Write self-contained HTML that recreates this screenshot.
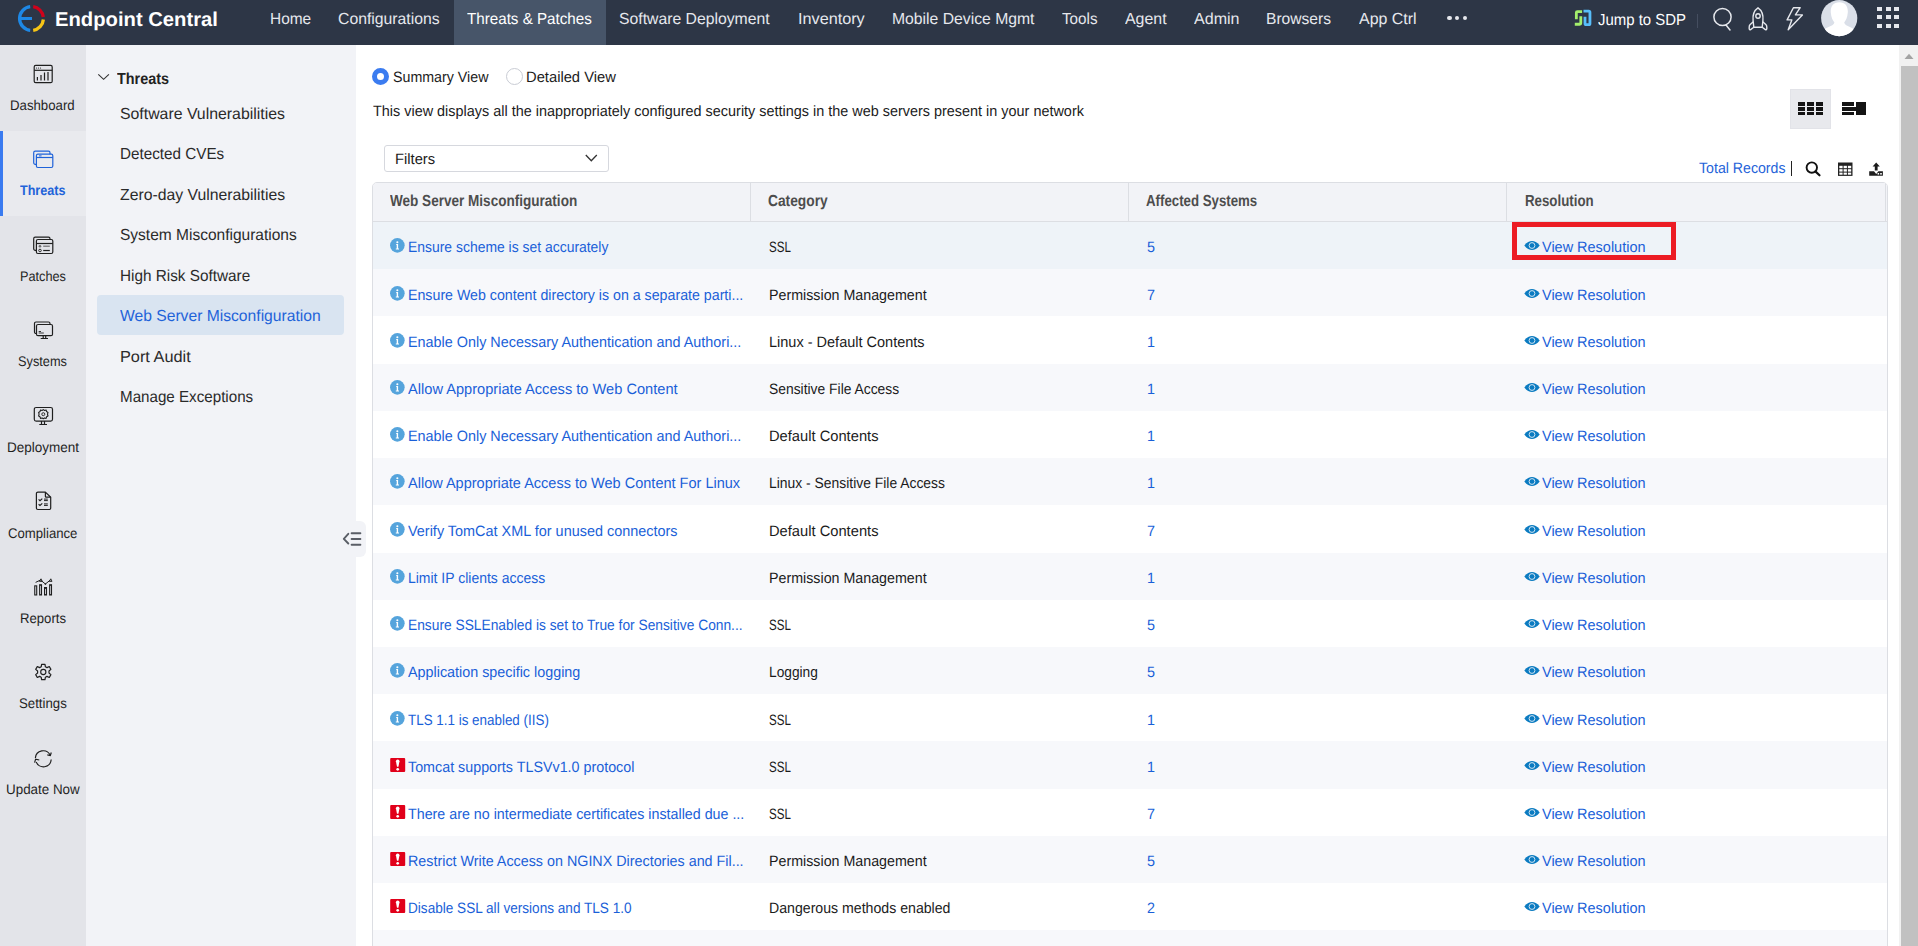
<!DOCTYPE html>
<html><head><meta charset="utf-8">
<style>
*{margin:0;padding:0;box-sizing:border-box}
html,body{width:1918px;height:946px;overflow:hidden;background:#fff;font-family:"Liberation Sans",sans-serif;color:#1b1b1b}
.a{position:absolute;white-space:nowrap;line-height:1;transform-origin:0 0;text-rendering:geometricPrecision}
.b{position:absolute}
svg{position:absolute;overflow:visible}
</style></head><body>
<div class="b" style="left:0;top:0;width:1918px;height:45px;background:#2d3646"></div>
<div class="b" style="left:454px;top:0;width:152px;height:45px;background:#475569"></div>
<svg style="left:17px;top:4px" width="30" height="30" viewBox="0 0 30 30">
<path d="M13.2 2.67 A11.9 11.9 0 0 0 13.2 26.33" fill="none" stroke="#1e88e5" stroke-width="3.3"/>
<path d="M1.2 14.5 H15" stroke="#1e88e5" stroke-width="3"/>
<path d="M16.2 2.72 A11.9 11.9 0 0 1 26.3 13" fill="none" stroke="#d0021b" stroke-width="3.3"/>
<path d="M26.36 15.5 A11.9 11.9 0 0 1 16.2 26.28" fill="none" stroke="#f6c416" stroke-width="3.3"/>
</svg>
<div class="a" style="left:55.40px;top:9.7px;font-size:20px;color:#ffffff;font-weight:bold;transform:scaleX(1.0112);">Endpoint Central</div>
<div class="a" style="left:269.90px;top:12px;font-size:16px;color:#e6e8ed;transform:scaleX(0.9649);">Home</div>
<div class="a" style="left:338.40px;top:12px;font-size:16px;color:#e6e8ed;transform:scaleX(0.9850);">Configurations</div>
<div class="a" style="left:467.40px;top:12px;font-size:16px;color:#ffffff;transform:scaleX(0.9483);">Threats &amp; Patches</div>
<div class="a" style="left:619.20px;top:12px;font-size:16px;color:#e6e8ed;transform:scaleX(0.9846);">Software Deployment</div>
<div class="a" style="left:797.80px;top:12px;font-size:16px;color:#e6e8ed;transform:scaleX(1.0137);">Inventory</div>
<div class="a" style="left:892.00px;top:12px;font-size:16px;color:#e6e8ed;transform:scaleX(0.9831);">Mobile Device Mgmt</div>
<div class="a" style="left:1062.30px;top:12px;font-size:16px;color:#e6e8ed;transform:scaleX(0.9505);">Tools</div>
<div class="a" style="left:1125.00px;top:12px;font-size:16px;color:#e6e8ed;transform:scaleX(0.9952);">Agent</div>
<div class="a" style="left:1193.50px;top:12px;font-size:16px;color:#e6e8ed;transform:scaleX(1.0033);">Admin</div>
<div class="a" style="left:1266.40px;top:12px;font-size:16px;color:#e6e8ed;transform:scaleX(0.9745);">Browsers</div>
<div class="a" style="left:1359.00px;top:12px;font-size:16px;color:#e6e8ed;transform:scaleX(0.9965);">App Ctrl</div>
<div class="b" style="left:1447.2px;top:15.7px;width:4.6px;height:4.6px;border-radius:50%;background:#e6e8ed"></div>
<div class="b" style="left:1454.9px;top:15.7px;width:4.6px;height:4.6px;border-radius:50%;background:#e6e8ed"></div>
<div class="b" style="left:1462.7px;top:15.7px;width:4.6px;height:4.6px;border-radius:50%;background:#e6e8ed"></div>
<svg style="left:1570px;top:5px" width="26" height="26" viewBox="1570 5 26 26">
<path d="M1576.35 19.3 V12.6 Q1576.35 11.55 1577.4 11.55 H1582.1" fill="none" stroke="#a4ef6c" stroke-width="2.8"/>
<path d="M1580.8 16.3 V23.2 Q1580.8 24.25 1579.75 24.25 H1574.8" fill="none" stroke="#a4ef6c" stroke-width="2.8"/>
<path d="M1585 16.8 V23.4 Q1585 24.65 1586.25 24.65 H1588.7 Q1589.95 24.65 1589.95 23.4 V12.45 Q1589.95 11.2 1588.7 11.2 H1583.5" fill="none" stroke="#58befa" stroke-width="2.8"/>
</svg>
<div class="a" style="left:1598.00px;top:13px;font-size:16px;color:#ffffff;transform:scaleX(0.9337);">Jump to SDP</div>
<div class="b" style="left:1697px;top:14px;width:1px;height:14px;background:#454e60"></div>
<svg style="left:1712px;top:7px" width="22" height="24" viewBox="0 0 22 24">
<circle cx="10.5" cy="10" r="8.6" fill="none" stroke="#e6e8ed" stroke-width="1.5"/>
<path d="M14 18 L18 23" stroke="#e6e8ed" stroke-width="1.5" stroke-linecap="round"/>
</svg>
<svg style="left:1748px;top:7px" width="20" height="24" viewBox="0 0 20 24">
<path d="M10 0.8 C14 3.5 15.4 8.5 14.9 13.5 L14.2 20.3 H5.8 L5.1 13.5 C4.6 8.5 6 3.5 10 0.8 Z" fill="none" stroke="#e6e8ed" stroke-width="1.4" stroke-linejoin="round"/>
<circle cx="10" cy="9" r="2.2" fill="none" stroke="#e6e8ed" stroke-width="1.4"/>
<path d="M5.3 14.8 L2.2 17.6 C1.5 18.3 1.2 19 1.2 20 V21.8 C1.2 22.6 1.9 23 2.6 22.6 L5.8 20.3 M14.7 14.8 L17.8 17.6 C18.5 18.3 18.8 19 18.8 20 V21.8 C18.8 22.6 18.1 23 17.4 22.6 L14.2 20.3" fill="none" stroke="#e6e8ed" stroke-width="1.4" stroke-linejoin="round"/>
</svg>
<svg style="left:1786px;top:7px" width="18" height="24" viewBox="0 0 18 24">
<path d="M7.4 0.7 H14.2 L9.4 7.9 H16.4 L2.2 22.8 L5.8 12.9 H1.1 Z" fill="none" stroke="#e6e8ed" stroke-width="1.4" stroke-linejoin="round"/>
</svg>
<svg style="left:1821px;top:0px" width="37" height="37" viewBox="0 0 37 37">
<defs><clipPath id="avc"><circle cx="18.2" cy="18.1" r="18.1"/></clipPath></defs>
<circle cx="18.2" cy="18.1" r="18.1" fill="#dadfe8"/>
<g clip-path="url(#avc)">
<path d="M18.3 2.2 C24.5 2.2 27.2 6.5 26.8 12.5 C26.4 17.5 24.8 20.5 23.2 22.6 C23.6 24.6 26 26 30 27.5 C34 29 36.5 32 37 37 H-1 C-0.5 32 2.5 29 6.5 27.5 C10.5 26 13 24.6 13.4 22.6 C11.8 20.5 10.2 17.5 9.8 12.5 C9.4 6.5 12.1 2.2 18.3 2.2 Z" fill="#ffffff"/>
</g>
</svg>
<div class="b" style="left:1877px;top:7px;width:4.8px;height:4.2px;background:#e6e8ed"></div>
<div class="b" style="left:1877px;top:15.1px;width:4.8px;height:4.2px;background:#e6e8ed"></div>
<div class="b" style="left:1877px;top:23.9px;width:4.8px;height:4.2px;background:#e6e8ed"></div>
<div class="b" style="left:1885.8px;top:7px;width:4.8px;height:4.2px;background:#e6e8ed"></div>
<div class="b" style="left:1885.8px;top:15.1px;width:4.8px;height:4.2px;background:#e6e8ed"></div>
<div class="b" style="left:1885.8px;top:23.9px;width:4.8px;height:4.2px;background:#e6e8ed"></div>
<div class="b" style="left:1894.2px;top:7px;width:4.8px;height:4.2px;background:#e6e8ed"></div>
<div class="b" style="left:1894.2px;top:15.1px;width:4.8px;height:4.2px;background:#e6e8ed"></div>
<div class="b" style="left:1894.2px;top:23.9px;width:4.8px;height:4.2px;background:#e6e8ed"></div>
<div class="b" style="left:0;top:45px;width:86px;height:901px;background:#e3e4e9"></div>
<div class="b" style="left:0;top:131px;width:86px;height:85px;background:#e9eaee"></div>
<div class="b" style="left:0;top:131px;width:3px;height:85px;background:#3a7bf0"></div>
<div class="a" style="left:10.40px;top:98px;font-size:14px;color:#1f1f1f;transform:scaleX(0.9445);">Dashboard</div>
<div class="a" style="left:20.30px;top:183px;font-size:14px;color:#1f63d9;font-weight:bold;transform:scaleX(0.8981);">Threats</div>
<div class="a" style="left:19.90px;top:269px;font-size:14px;color:#1f1f1f;transform:scaleX(0.9091);">Patches</div>
<div class="a" style="left:18.30px;top:354px;font-size:14px;color:#1f1f1f;transform:scaleX(0.9106);">Systems</div>
<div class="a" style="left:7.10px;top:440px;font-size:14px;color:#1f1f1f;transform:scaleX(0.9652);">Deployment</div>
<div class="a" style="left:7.90px;top:526px;font-size:14px;color:#1f1f1f;transform:scaleX(0.9391);">Compliance</div>
<div class="a" style="left:19.80px;top:611px;font-size:14px;color:#1f1f1f;transform:scaleX(0.9388);">Reports</div>
<div class="a" style="left:18.70px;top:696px;font-size:14px;color:#1f1f1f;transform:scaleX(0.9447);">Settings</div>
<div class="a" style="left:6.10px;top:782px;font-size:14px;color:#1f1f1f;transform:scaleX(0.9572);">Update Now</div>
<svg style="left:33px;top:64px" width="21" height="20" viewBox="0 0 21 20">
<rect x="1.2" y="1.4" width="18" height="17.3" rx="1.5" fill="none" stroke="#1f1f1f" stroke-width="1.2"/>
<path d="M1.2 6.3 H19.2" stroke="#1f1f1f" stroke-width="1.2"/>
<circle cx="3.5" cy="4" r="0.6" fill="#1f1f1f"/><circle cx="5.5" cy="4" r="0.6" fill="#1f1f1f"/><circle cx="7.5" cy="4" r="0.6" fill="#1f1f1f"/>
<path d="M4.4 13 V16.5 M8 11 V16.5 M11.5 8.5 V16.5 M15 8 V16.5" stroke="#1f1f1f" stroke-width="1.2"/>
</svg>
<svg style="left:32px;top:150px" width="22" height="19" viewBox="0 0 22 19">
<path d="M4.4 14.3 H3.2 A1.5 1.5 0 0 1 1.7 12.8 V2.7 A1.5 1.5 0 0 1 3.2 1.2 H16.5 A1.5 1.5 0 0 1 18 2.7 V4.2" fill="none" stroke="#1f63d9" stroke-width="1.2"/>
<rect x="4.4" y="4.2" width="16.4" height="13.3" rx="1.5" fill="none" stroke="#1f63d9" stroke-width="1.2"/>
<path d="M4.4 7.5 H20.8" stroke="#1f63d9" stroke-width="1.2"/>
<path d="M7 5.9 H9.6" stroke="#1f63d9" stroke-width="1"/>
</svg>
<svg style="left:32px;top:236px" width="22" height="19" viewBox="0 0 22 19">
<path d="M4.4 14.3 H3.2 A1.5 1.5 0 0 1 1.7 12.8 V2.7 A1.5 1.5 0 0 1 3.2 1.2 H16.5 A1.5 1.5 0 0 1 18 2.7 V3.5" fill="none" stroke="#1f1f1f" stroke-width="1.2"/>
<rect x="4.4" y="3.5" width="16.4" height="14" rx="1.5" fill="none" stroke="#1f1f1f" stroke-width="1.2"/>
<path d="M4.4 7.5 H20.8" stroke="#1f1f1f" stroke-width="1.2"/>
<circle cx="8" cy="10.2" r="1.3" fill="#1f1f1f" opacity="0.6"/><path d="M11.2 10.2 H17.8" stroke="#1f1f1f" stroke-width="1.2" opacity="0.6"/>
<circle cx="8" cy="14.5" r="1.3" fill="none" stroke="#1f1f1f" stroke-width="0.9"/><path d="M11.2 14.5 H17.8" stroke="#1f1f1f" stroke-width="1.2"/>
</svg>
<svg style="left:33px;top:321px" width="21" height="19" viewBox="0 0 21 19">
<path d="M3.5 12.5 H3 A1.5 1.5 0 0 1 1.5 11 V2.5 A1.5 1.5 0 0 1 3 1 H15.5 A1.5 1.5 0 0 1 17 2.5 V3.5" fill="none" stroke="#1f1f1f" stroke-width="1.2"/>
<rect x="3.5" y="3.5" width="16" height="11.2" rx="1.5" fill="none" stroke="#1f1f1f" stroke-width="1.2"/>
<path d="M5.7 10.5 H8 M5.7 12 H10.8" stroke="#1f1f1f" stroke-width="0.9"/>
<path d="M10.2 14.7 V17.5 M12.7 14.7 V17.5 M7.7 17.5 H15" stroke="#1f1f1f" stroke-width="1.2"/>
</svg>
<svg style="left:33px;top:406px" width="21" height="20" viewBox="0 0 21 20">
<rect x="1.3" y="1.5" width="18.2" height="13.6" rx="1.8" fill="none" stroke="#1f1f1f" stroke-width="1.2"/>
<path d="M8.5 15.1 V18.3 M11.5 15.1 V18.3 M6.3 18.5 H14" stroke="#1f1f1f" stroke-width="1.2"/>
<path d="M10.3 3.6 L11.6 4.5 L13.1 4 L13.6 5.6 L15 6.4 L14.5 8.2 L15 10 L13.6 10.8 L13.1 12.4 L11.6 11.9 L10.3 12.8 L9 11.9 L7.5 12.4 L7 10.8 L5.6 10 L6.1 8.2 L5.6 6.4 L7 5.6 L7.5 4 L9 4.5 Z" fill="none" stroke="#1f1f1f" stroke-width="1.1" stroke-linejoin="round"/>
<circle cx="10.3" cy="8.2" r="1.5" fill="none" stroke="#1f1f1f" stroke-width="0.9"/>
</svg>
<svg style="left:35px;top:491px" width="17" height="20" viewBox="0 0 17 20">
<path d="M10.4 1.1 H2.9 A1.5 1.5 0 0 0 1.4 2.6 V17 A1.5 1.5 0 0 0 2.9 18.5 H14.2 A1.5 1.5 0 0 0 15.7 17 V6.2 Z" fill="none" stroke="#1f1f1f" stroke-width="1.2" stroke-linejoin="round"/>
<path d="M10.4 1.1 V5.4 A0.8 0.8 0 0 0 11.2 6.2 H15.7" fill="none" stroke="#1f1f1f" stroke-width="1.2"/>
<path d="M3.6 8.4 L5 9.6 L7.3 7.6 M3.6 13.2 L5 14.4 L7.3 12.4" fill="none" stroke="#1f1f1f" stroke-width="1.2"/>
<path d="M9 8.1 H12.8 M9 9.6 H12.8 M9 12.9 H12.8 M9 14.4 H12.8" stroke="#1f1f1f" stroke-width="1"/>
</svg>
<svg style="left:33px;top:577px" width="21" height="21" viewBox="0 0 21 21">
<rect x="1.75" y="8.85" width="1.95" height="9.1" fill="none" stroke="#1f1f1f" stroke-width="1.1"/>
<rect x="6.65" y="7.75" width="1.85" height="10.2" fill="none" stroke="#1f1f1f" stroke-width="1.1"/>
<rect x="11.55" y="10.55" width="1.95" height="7.4" fill="none" stroke="#1f1f1f" stroke-width="1.1"/>
<rect x="16.65" y="7.75" width="1.85" height="10.2" fill="none" stroke="#1f1f1f" stroke-width="1.1"/>
<path d="M2.6 5.4 L7.5 3 L12.4 7 L17.4 3" fill="none" stroke="#1f1f1f" stroke-width="1"/>
<path d="M6.4 4.4 L8 1.8 L9.3 4.4 Z M16.3 4.4 L17.8 1.8 L19 4.4 Z" fill="none" stroke="#1f1f1f" stroke-width="0.9"/>
<path d="M11.4 7 L12.4 6 L13.4 7 L12.4 8 Z" fill="#1f1f1f"/>
</svg>
<svg style="left:33px;top:662px" width="21" height="20" viewBox="0 0 21 20">
<path d="M8.6 1.3 H12 L12.4 3.8 L14 4.6 L16.3 3.5 L17.9 6.4 L16 8 V10 L17.9 11.6 L16.3 14.5 L14 13.4 L12.4 14.2 L12 16.7 H8.6 L8.2 14.2 L6.6 13.4 L4.3 14.5 L2.7 11.6 L4.6 10 V8 L2.7 6.4 L4.3 3.5 L6.6 4.6 L8.2 3.8 Z" fill="none" stroke="#1f1f1f" stroke-width="1.2" stroke-linejoin="round" transform="translate(0,1)"/>
<circle cx="10.3" cy="10" r="2.6" fill="none" stroke="#1f1f1f" stroke-width="1.1"/>
</svg>
<svg style="left:33px;top:749px" width="21" height="20" viewBox="0 0 21 20">
<path d="M2.4 9 A7.8 7.8 0 0 1 17.2 6.2" fill="none" stroke="#1f1f1f" stroke-width="1.2"/>
<path d="M18.2 10.5 A7.8 7.8 0 0 1 3.2 13" fill="none" stroke="#1f1f1f" stroke-width="1.2"/>
<path d="M14.3 5.8 L17.3 6.5 L18.3 3.5" fill="none" stroke="#1f1f1f" stroke-width="1.2"/>
<path d="M6.3 11 L2.6 10.2 L1.6 13.6" fill="none" stroke="#1f1f1f" stroke-width="1.2"/>
</svg>
<div class="b" style="left:86px;top:45px;width:270px;height:901px;background:#f2f3f7"></div>
<div class="b" style="left:340px;top:521px;width:26px;height:36px;border-radius:0 6px 6px 0;background:#f2f3f7"></div>
<svg style="left:342px;top:532px" width="20" height="14" viewBox="0 0 20 14">
<path d="M6.3 1.8 L1.8 6.8 L6.3 11.5" fill="none" stroke="#5a5e66" stroke-width="1.9" stroke-linecap="round" stroke-linejoin="round"/>
<path d="M9.6 1.3 H18.4 M9.6 7 H18.4 M9.6 12.7 H18.4" stroke="#5a5e66" stroke-width="1.9" stroke-linecap="round"/>
</svg>
<svg style="left:97px;top:72px" width="14" height="11" viewBox="0 0 14 11">
<path d="M1.3 2.3 L6.6 7.3 L11.9 2.3" fill="none" stroke="#333" stroke-width="1.15"/>
</svg>
<div class="a" style="left:116.70px;top:72px;font-size:16px;color:#222;font-weight:bold;transform:scaleX(0.8997);">Threats</div>
<div class="b" style="left:97px;top:295px;width:247px;height:40px;border-radius:4px;background:#d9e4f1"></div>
<div class="a" style="left:119.70px;top:107px;font-size:16px;color:#2a2a2a;transform:scaleX(0.9898);">Software Vulnerabilities</div>
<div class="a" style="left:119.70px;top:147px;font-size:16px;color:#2a2a2a;transform:scaleX(0.9525);">Detected CVEs</div>
<div class="a" style="left:119.70px;top:188px;font-size:16px;color:#2a2a2a;transform:scaleX(0.9857);">Zero-day Vulnerabilities</div>
<div class="a" style="left:119.70px;top:228px;font-size:16px;color:#2a2a2a;transform:scaleX(0.9693);">System Misconfigurations</div>
<div class="a" style="left:119.70px;top:269px;font-size:16px;color:#2a2a2a;transform:scaleX(0.9570);">High Risk Software</div>
<div class="a" style="left:119.70px;top:309px;font-size:16px;color:#1f63d9;transform:scaleX(0.9783);">Web Server Misconfiguration</div>
<div class="a" style="left:119.70px;top:350px;font-size:16px;color:#2a2a2a;transform:scaleX(1.0187);">Port Audit</div>
<div class="a" style="left:119.70px;top:390px;font-size:16px;color:#2a2a2a;transform:scaleX(0.9477);">Manage Exceptions</div>
<div class="b" style="left:372px;top:67.5px;width:17px;height:17px;border-radius:50%;border:5px solid #3b7cf0;background:#fff"></div>
<div class="b" style="left:505.5px;top:67.5px;width:17px;height:17px;border-radius:50%;border:1px solid #c9ccd4;background:#fff"></div>
<div class="a" style="left:393.20px;top:70px;font-size:15px;color:#1b1b1b;transform:scaleX(0.9488);">Summary View</div>
<div class="a" style="left:526.30px;top:70px;font-size:15px;color:#1b1b1b;transform:scaleX(0.9825);">Detailed View</div>
<div class="a" style="left:373.10px;top:104px;font-size:15px;color:#1b1b1b;transform:scaleX(0.9613);">This view displays all the inappropriately configured security settings in the web servers present in your network</div>
<div class="b" style="left:384px;top:145px;width:225px;height:27px;border:1px solid #d6d8de;border-radius:3px;background:#fff"></div>
<div class="a" style="left:394.50px;top:152px;font-size:15px;color:#1b1b1b;transform:scaleX(0.9816);">Filters</div>
<svg style="left:584px;top:153px" width="15" height="11" viewBox="0 0 15 11">
<path d="M1.8 2 L7.3 7.8 L12.8 2" fill="none" stroke="#333" stroke-width="1.3"/>
</svg>
<div class="b" style="left:1790px;top:89px;width:41px;height:40px;background:#e8e9ed;border:1px solid #e2e3e8"></div>
<div class="b" style="left:1797.8px;top:102.2px;width:7px;height:3.4px;background:#141414"></div>
<div class="b" style="left:1797.8px;top:107.2px;width:7px;height:3.4px;background:#141414"></div>
<div class="b" style="left:1797.8px;top:112px;width:7px;height:3.4px;background:#141414"></div>
<div class="b" style="left:1806.8px;top:102.2px;width:7px;height:3.4px;background:#141414"></div>
<div class="b" style="left:1806.8px;top:107.2px;width:7px;height:3.4px;background:#141414"></div>
<div class="b" style="left:1806.8px;top:112px;width:7px;height:3.4px;background:#141414"></div>
<div class="b" style="left:1815.6px;top:102.2px;width:7px;height:3.4px;background:#141414"></div>
<div class="b" style="left:1815.6px;top:107.2px;width:7px;height:3.4px;background:#141414"></div>
<div class="b" style="left:1815.6px;top:112px;width:7px;height:3.4px;background:#141414"></div>
<div class="b" style="left:1842px;top:102.2px;width:12px;height:3.4px;background:#141414"></div>
<div class="b" style="left:1842px;top:107.2px;width:14px;height:3.4px;background:#141414"></div>
<div class="b" style="left:1842px;top:112px;width:12px;height:3.4px;background:#141414"></div>
<div class="b" style="left:1856px;top:102.2px;width:10.4px;height:13.3px;background:#141414"></div>
<div class="a" style="left:1699.40px;top:161px;font-size:15px;color:#1f63d9;transform:scaleX(0.9433);">Total Records</div>
<div class="b" style="left:1790.5px;top:161px;width:1.5px;height:14.5px;background:#222"></div>
<svg style="left:1804px;top:160px" width="18" height="18" viewBox="0 0 18 18">
<circle cx="7.8" cy="7.6" r="5.2" fill="none" stroke="#111" stroke-width="1.9"/>
<path d="M11.6 11.6 L15.5 15.3" stroke="#111" stroke-width="2.2" stroke-linecap="round"/>
</svg>
<svg style="left:1838px;top:162px" width="15" height="14" viewBox="0 0 15 14">
<rect x="0" y="0.5" width="14.5" height="13.4" fill="#222"/>
<g fill="#fff">
<rect x="1.3" y="3.8" width="3.3" height="2.4"/><rect x="5.6" y="3.8" width="3.3" height="2.4"/><rect x="9.9" y="3.8" width="3.3" height="2.4"/>
<rect x="1.3" y="7.2" width="3.3" height="2.4"/><rect x="5.6" y="7.2" width="3.3" height="2.4"/><rect x="9.9" y="7.2" width="3.3" height="2.4"/>
<rect x="1.3" y="10.6" width="3.3" height="2.1"/><rect x="5.6" y="10.6" width="3.3" height="2.1"/><rect x="9.9" y="10.6" width="3.3" height="2.1"/>
</g>
</svg>
<svg style="left:1865px;top:160px" width="22" height="18" viewBox="1865 160 22 18">
<path d="M1876.2 162.6 L1879.8 166.4 H1877.6 V170.6 H1874.8 V166.4 H1872.6 Z" fill="#1a1a1a"/>
<path d="M1869.2 171.2 H1874 L1876.2 173.9 L1878.4 171.2 H1882.9 V175.7 H1869.2 Z" fill="#1f1f1f"/>
<rect x="1877.6" y="173" width="1.5" height="1.6" fill="#fff"/><rect x="1880.2" y="173" width="1.6" height="1.6" fill="#fff"/>
</svg>
<div class="b" style="left:372px;top:182px;width:1516px;height:800px;border:1px solid #dcdee3;border-radius:5px 5px 0 0;background:#fff;overflow:hidden"><div class="b" style="left:0;top:0;width:100%;height:39px;background:#f2f3f7;border-bottom:1px solid #dcdee3"></div><div class="b" style="left:377px;top:0;width:1px;height:38px;background:#dcdee3"></div><div class="b" style="left:755px;top:0;width:1px;height:38px;background:#dcdee3"></div><div class="b" style="left:1133px;top:0;width:1px;height:38px;background:#dcdee3"></div><div class="b" style="left:1512px;top:0;width:1px;height:38px;background:#dcdee3"></div><div class="b" style="left:0;top:39.00px;width:100%;height:47.22px;background:#eef3f8"></div><div class="b" style="left:0;top:86.22px;width:100%;height:47.22px;background:#f7f8fb"></div><div class="b" style="left:0;top:133.44px;width:100%;height:47.22px;background:#ffffff"></div><div class="b" style="left:0;top:180.66px;width:100%;height:47.22px;background:#f7f8fb"></div><div class="b" style="left:0;top:227.88px;width:100%;height:47.22px;background:#ffffff"></div><div class="b" style="left:0;top:275.10px;width:100%;height:47.22px;background:#f7f8fb"></div><div class="b" style="left:0;top:322.32px;width:100%;height:47.22px;background:#ffffff"></div><div class="b" style="left:0;top:369.54px;width:100%;height:47.22px;background:#f7f8fb"></div><div class="b" style="left:0;top:416.76px;width:100%;height:47.22px;background:#ffffff"></div><div class="b" style="left:0;top:463.98px;width:100%;height:47.22px;background:#f7f8fb"></div><div class="b" style="left:0;top:511.20px;width:100%;height:47.22px;background:#ffffff"></div><div class="b" style="left:0;top:558.42px;width:100%;height:47.22px;background:#f7f8fb"></div><div class="b" style="left:0;top:605.64px;width:100%;height:47.22px;background:#ffffff"></div><div class="b" style="left:0;top:652.86px;width:100%;height:47.22px;background:#f7f8fb"></div><div class="b" style="left:0;top:700.08px;width:100%;height:47.22px;background:#ffffff"></div><div class="b" style="left:0;top:747.30px;width:100%;height:47.22px;background:#f7f8fb"></div></div>
<svg style="left:390px;top:237.7px" width="15" height="15" viewBox="0 0 15 15">
<circle cx="7.35" cy="7.35" r="7.3" fill="#55a4dc"/>
<path d="M6.2 6.1 H8.1 V10.6 H9 V11.6 H5.8 V10.6 H6.7 V7.1 H6.2 Z" fill="#fff"/><circle cx="7.35" cy="4.2" r="1.05" fill="#fff"/>
</svg>
<div class="a" style="left:408.30px;top:240px;font-size:15px;color:#1a5fd8;transform:scaleX(0.9282);">Ensure scheme is set accurately</div>
<div class="a" style="left:768.60px;top:240px;font-size:15px;color:#1b1b1b;transform:scaleX(0.7725);">SSL</div>
<div class="a" style="left:1147.00px;top:240px;font-size:15px;color:#1a5fd8;transform:scaleX(0.9581);">5</div>
<svg style="left:1523.5px;top:240.5px" width="16" height="10" viewBox="0 0 16 10">
<path d="M0.3 4.5 C3 1 5.5 0 8 0 C10.5 0 13 1 15.7 4.5 C13 8 10.5 9 8 9 C5.5 9 3 8 0.3 4.5 Z" fill="#0b7bc1"/>
<circle cx="8" cy="4.5" r="2.9" fill="none" stroke="#cfe4f2" stroke-width="1"/>
</svg>
<div class="a" style="left:1542.30px;top:240px;font-size:15px;color:#1a5fd8;transform:scaleX(0.9646);">View Resolution</div>
<svg style="left:390px;top:285.7px" width="15" height="15" viewBox="0 0 15 15">
<circle cx="7.35" cy="7.35" r="7.3" fill="#55a4dc"/>
<path d="M6.2 6.1 H8.1 V10.6 H9 V11.6 H5.8 V10.6 H6.7 V7.1 H6.2 Z" fill="#fff"/><circle cx="7.35" cy="4.2" r="1.05" fill="#fff"/>
</svg>
<div class="a" style="left:408.30px;top:288px;font-size:15px;color:#1a5fd8;transform:scaleX(0.9470);">Ensure Web content directory is on a separate parti...</div>
<div class="a" style="left:768.60px;top:288px;font-size:15px;color:#1b1b1b;transform:scaleX(0.9500);">Permission Management</div>
<div class="a" style="left:1147.00px;top:288px;font-size:15px;color:#1a5fd8;transform:scaleX(0.9581);">7</div>
<svg style="left:1523.5px;top:288.5px" width="16" height="10" viewBox="0 0 16 10">
<path d="M0.3 4.5 C3 1 5.5 0 8 0 C10.5 0 13 1 15.7 4.5 C13 8 10.5 9 8 9 C5.5 9 3 8 0.3 4.5 Z" fill="#0b7bc1"/>
<circle cx="8" cy="4.5" r="2.9" fill="none" stroke="#cfe4f2" stroke-width="1"/>
</svg>
<div class="a" style="left:1542.30px;top:288px;font-size:15px;color:#1a5fd8;transform:scaleX(0.9646);">View Resolution</div>
<svg style="left:390px;top:332.7px" width="15" height="15" viewBox="0 0 15 15">
<circle cx="7.35" cy="7.35" r="7.3" fill="#55a4dc"/>
<path d="M6.2 6.1 H8.1 V10.6 H9 V11.6 H5.8 V10.6 H6.7 V7.1 H6.2 Z" fill="#fff"/><circle cx="7.35" cy="4.2" r="1.05" fill="#fff"/>
</svg>
<div class="a" style="left:408.30px;top:335px;font-size:15px;color:#1a5fd8;transform:scaleX(0.9586);">Enable Only Necessary Authentication and Authori...</div>
<div class="a" style="left:768.60px;top:335px;font-size:15px;color:#1b1b1b;transform:scaleX(0.9671);">Linux - Default Contents</div>
<div class="a" style="left:1147.00px;top:335px;font-size:15px;color:#1a5fd8;transform:scaleX(0.9581);">1</div>
<svg style="left:1523.5px;top:335.5px" width="16" height="10" viewBox="0 0 16 10">
<path d="M0.3 4.5 C3 1 5.5 0 8 0 C10.5 0 13 1 15.7 4.5 C13 8 10.5 9 8 9 C5.5 9 3 8 0.3 4.5 Z" fill="#0b7bc1"/>
<circle cx="8" cy="4.5" r="2.9" fill="none" stroke="#cfe4f2" stroke-width="1"/>
</svg>
<div class="a" style="left:1542.30px;top:335px;font-size:15px;color:#1a5fd8;transform:scaleX(0.9646);">View Resolution</div>
<svg style="left:390px;top:379.7px" width="15" height="15" viewBox="0 0 15 15">
<circle cx="7.35" cy="7.35" r="7.3" fill="#55a4dc"/>
<path d="M6.2 6.1 H8.1 V10.6 H9 V11.6 H5.8 V10.6 H6.7 V7.1 H6.2 Z" fill="#fff"/><circle cx="7.35" cy="4.2" r="1.05" fill="#fff"/>
</svg>
<div class="a" style="left:408.30px;top:382px;font-size:15px;color:#1a5fd8;transform:scaleX(0.9749);">Allow Appropriate Access to Web Content</div>
<div class="a" style="left:768.60px;top:382px;font-size:15px;color:#1b1b1b;transform:scaleX(0.9241);">Sensitive File Access</div>
<div class="a" style="left:1147.00px;top:382px;font-size:15px;color:#1a5fd8;transform:scaleX(0.9581);">1</div>
<svg style="left:1523.5px;top:382.5px" width="16" height="10" viewBox="0 0 16 10">
<path d="M0.3 4.5 C3 1 5.5 0 8 0 C10.5 0 13 1 15.7 4.5 C13 8 10.5 9 8 9 C5.5 9 3 8 0.3 4.5 Z" fill="#0b7bc1"/>
<circle cx="8" cy="4.5" r="2.9" fill="none" stroke="#cfe4f2" stroke-width="1"/>
</svg>
<div class="a" style="left:1542.30px;top:382px;font-size:15px;color:#1a5fd8;transform:scaleX(0.9646);">View Resolution</div>
<svg style="left:390px;top:426.7px" width="15" height="15" viewBox="0 0 15 15">
<circle cx="7.35" cy="7.35" r="7.3" fill="#55a4dc"/>
<path d="M6.2 6.1 H8.1 V10.6 H9 V11.6 H5.8 V10.6 H6.7 V7.1 H6.2 Z" fill="#fff"/><circle cx="7.35" cy="4.2" r="1.05" fill="#fff"/>
</svg>
<div class="a" style="left:408.30px;top:429px;font-size:15px;color:#1a5fd8;transform:scaleX(0.9586);">Enable Only Necessary Authentication and Authori...</div>
<div class="a" style="left:768.60px;top:429px;font-size:15px;color:#1b1b1b;transform:scaleX(0.9799);">Default Contents</div>
<div class="a" style="left:1147.00px;top:429px;font-size:15px;color:#1a5fd8;transform:scaleX(0.9581);">1</div>
<svg style="left:1523.5px;top:429.5px" width="16" height="10" viewBox="0 0 16 10">
<path d="M0.3 4.5 C3 1 5.5 0 8 0 C10.5 0 13 1 15.7 4.5 C13 8 10.5 9 8 9 C5.5 9 3 8 0.3 4.5 Z" fill="#0b7bc1"/>
<circle cx="8" cy="4.5" r="2.9" fill="none" stroke="#cfe4f2" stroke-width="1"/>
</svg>
<div class="a" style="left:1542.30px;top:429px;font-size:15px;color:#1a5fd8;transform:scaleX(0.9646);">View Resolution</div>
<svg style="left:390px;top:473.7px" width="15" height="15" viewBox="0 0 15 15">
<circle cx="7.35" cy="7.35" r="7.3" fill="#55a4dc"/>
<path d="M6.2 6.1 H8.1 V10.6 H9 V11.6 H5.8 V10.6 H6.7 V7.1 H6.2 Z" fill="#fff"/><circle cx="7.35" cy="4.2" r="1.05" fill="#fff"/>
</svg>
<div class="a" style="left:408.30px;top:476px;font-size:15px;color:#1a5fd8;transform:scaleX(0.9675);">Allow Appropriate Access to Web Content For Linux</div>
<div class="a" style="left:768.60px;top:476px;font-size:15px;color:#1b1b1b;transform:scaleX(0.9258);">Linux - Sensitive File Access</div>
<div class="a" style="left:1147.00px;top:476px;font-size:15px;color:#1a5fd8;transform:scaleX(0.9581);">1</div>
<svg style="left:1523.5px;top:476.5px" width="16" height="10" viewBox="0 0 16 10">
<path d="M0.3 4.5 C3 1 5.5 0 8 0 C10.5 0 13 1 15.7 4.5 C13 8 10.5 9 8 9 C5.5 9 3 8 0.3 4.5 Z" fill="#0b7bc1"/>
<circle cx="8" cy="4.5" r="2.9" fill="none" stroke="#cfe4f2" stroke-width="1"/>
</svg>
<div class="a" style="left:1542.30px;top:476px;font-size:15px;color:#1a5fd8;transform:scaleX(0.9646);">View Resolution</div>
<svg style="left:390px;top:521.7px" width="15" height="15" viewBox="0 0 15 15">
<circle cx="7.35" cy="7.35" r="7.3" fill="#55a4dc"/>
<path d="M6.2 6.1 H8.1 V10.6 H9 V11.6 H5.8 V10.6 H6.7 V7.1 H6.2 Z" fill="#fff"/><circle cx="7.35" cy="4.2" r="1.05" fill="#fff"/>
</svg>
<div class="a" style="left:408.30px;top:524px;font-size:15px;color:#1a5fd8;transform:scaleX(0.9623);">Verify TomCat XML for unused connectors</div>
<div class="a" style="left:768.60px;top:524px;font-size:15px;color:#1b1b1b;transform:scaleX(0.9799);">Default Contents</div>
<div class="a" style="left:1147.00px;top:524px;font-size:15px;color:#1a5fd8;transform:scaleX(0.9581);">7</div>
<svg style="left:1523.5px;top:524.5px" width="16" height="10" viewBox="0 0 16 10">
<path d="M0.3 4.5 C3 1 5.5 0 8 0 C10.5 0 13 1 15.7 4.5 C13 8 10.5 9 8 9 C5.5 9 3 8 0.3 4.5 Z" fill="#0b7bc1"/>
<circle cx="8" cy="4.5" r="2.9" fill="none" stroke="#cfe4f2" stroke-width="1"/>
</svg>
<div class="a" style="left:1542.30px;top:524px;font-size:15px;color:#1a5fd8;transform:scaleX(0.9646);">View Resolution</div>
<svg style="left:390px;top:568.7px" width="15" height="15" viewBox="0 0 15 15">
<circle cx="7.35" cy="7.35" r="7.3" fill="#55a4dc"/>
<path d="M6.2 6.1 H8.1 V10.6 H9 V11.6 H5.8 V10.6 H6.7 V7.1 H6.2 Z" fill="#fff"/><circle cx="7.35" cy="4.2" r="1.05" fill="#fff"/>
</svg>
<div class="a" style="left:408.30px;top:571px;font-size:15px;color:#1a5fd8;transform:scaleX(0.9311);">Limit IP clients access</div>
<div class="a" style="left:768.60px;top:571px;font-size:15px;color:#1b1b1b;transform:scaleX(0.9500);">Permission Management</div>
<div class="a" style="left:1147.00px;top:571px;font-size:15px;color:#1a5fd8;transform:scaleX(0.9581);">1</div>
<svg style="left:1523.5px;top:571.5px" width="16" height="10" viewBox="0 0 16 10">
<path d="M0.3 4.5 C3 1 5.5 0 8 0 C10.5 0 13 1 15.7 4.5 C13 8 10.5 9 8 9 C5.5 9 3 8 0.3 4.5 Z" fill="#0b7bc1"/>
<circle cx="8" cy="4.5" r="2.9" fill="none" stroke="#cfe4f2" stroke-width="1"/>
</svg>
<div class="a" style="left:1542.30px;top:571px;font-size:15px;color:#1a5fd8;transform:scaleX(0.9646);">View Resolution</div>
<svg style="left:390px;top:615.7px" width="15" height="15" viewBox="0 0 15 15">
<circle cx="7.35" cy="7.35" r="7.3" fill="#55a4dc"/>
<path d="M6.2 6.1 H8.1 V10.6 H9 V11.6 H5.8 V10.6 H6.7 V7.1 H6.2 Z" fill="#fff"/><circle cx="7.35" cy="4.2" r="1.05" fill="#fff"/>
</svg>
<div class="a" style="left:408.30px;top:618px;font-size:15px;color:#1a5fd8;transform:scaleX(0.9183);">Ensure SSLEnabled is set to True for Sensitive Conn...</div>
<div class="a" style="left:768.60px;top:618px;font-size:15px;color:#1b1b1b;transform:scaleX(0.7725);">SSL</div>
<div class="a" style="left:1147.00px;top:618px;font-size:15px;color:#1a5fd8;transform:scaleX(0.9581);">5</div>
<svg style="left:1523.5px;top:618.5px" width="16" height="10" viewBox="0 0 16 10">
<path d="M0.3 4.5 C3 1 5.5 0 8 0 C10.5 0 13 1 15.7 4.5 C13 8 10.5 9 8 9 C5.5 9 3 8 0.3 4.5 Z" fill="#0b7bc1"/>
<circle cx="8" cy="4.5" r="2.9" fill="none" stroke="#cfe4f2" stroke-width="1"/>
</svg>
<div class="a" style="left:1542.30px;top:618px;font-size:15px;color:#1a5fd8;transform:scaleX(0.9646);">View Resolution</div>
<svg style="left:390px;top:662.7px" width="15" height="15" viewBox="0 0 15 15">
<circle cx="7.35" cy="7.35" r="7.3" fill="#55a4dc"/>
<path d="M6.2 6.1 H8.1 V10.6 H9 V11.6 H5.8 V10.6 H6.7 V7.1 H6.2 Z" fill="#fff"/><circle cx="7.35" cy="4.2" r="1.05" fill="#fff"/>
</svg>
<div class="a" style="left:408.30px;top:665px;font-size:15px;color:#1a5fd8;transform:scaleX(0.9567);">Application specific logging</div>
<div class="a" style="left:768.60px;top:665px;font-size:15px;color:#1b1b1b;transform:scaleX(0.9157);">Logging</div>
<div class="a" style="left:1147.00px;top:665px;font-size:15px;color:#1a5fd8;transform:scaleX(0.9581);">5</div>
<svg style="left:1523.5px;top:665.5px" width="16" height="10" viewBox="0 0 16 10">
<path d="M0.3 4.5 C3 1 5.5 0 8 0 C10.5 0 13 1 15.7 4.5 C13 8 10.5 9 8 9 C5.5 9 3 8 0.3 4.5 Z" fill="#0b7bc1"/>
<circle cx="8" cy="4.5" r="2.9" fill="none" stroke="#cfe4f2" stroke-width="1"/>
</svg>
<div class="a" style="left:1542.30px;top:665px;font-size:15px;color:#1a5fd8;transform:scaleX(0.9646);">View Resolution</div>
<svg style="left:390px;top:710.7px" width="15" height="15" viewBox="0 0 15 15">
<circle cx="7.35" cy="7.35" r="7.3" fill="#55a4dc"/>
<path d="M6.2 6.1 H8.1 V10.6 H9 V11.6 H5.8 V10.6 H6.7 V7.1 H6.2 Z" fill="#fff"/><circle cx="7.35" cy="4.2" r="1.05" fill="#fff"/>
</svg>
<div class="a" style="left:408.30px;top:713px;font-size:15px;color:#1a5fd8;transform:scaleX(0.8940);">TLS 1.1 is enabled (IIS)</div>
<div class="a" style="left:768.60px;top:713px;font-size:15px;color:#1b1b1b;transform:scaleX(0.7725);">SSL</div>
<div class="a" style="left:1147.00px;top:713px;font-size:15px;color:#1a5fd8;transform:scaleX(0.9581);">1</div>
<svg style="left:1523.5px;top:713.5px" width="16" height="10" viewBox="0 0 16 10">
<path d="M0.3 4.5 C3 1 5.5 0 8 0 C10.5 0 13 1 15.7 4.5 C13 8 10.5 9 8 9 C5.5 9 3 8 0.3 4.5 Z" fill="#0b7bc1"/>
<circle cx="8" cy="4.5" r="2.9" fill="none" stroke="#cfe4f2" stroke-width="1"/>
</svg>
<div class="a" style="left:1542.30px;top:713px;font-size:15px;color:#1a5fd8;transform:scaleX(0.9646);">View Resolution</div>
<svg style="left:389.8px;top:757.8px" width="16" height="15" viewBox="0 0 16 15">
<rect x="0.2" y="0" width="15" height="14.1" rx="1" fill="#e1001a"/>
<path d="M5.9 3.2 A1.8 1.8 0 0 1 9.5 3.2 L8.4 8.8 H7 Z" fill="#fff"/><circle cx="7.7" cy="11.3" r="1.35" fill="#fff"/>
</svg>
<div class="a" style="left:408.30px;top:760px;font-size:15px;color:#1a5fd8;transform:scaleX(0.9539);">Tomcat supports TLSVv1.0 protocol</div>
<div class="a" style="left:768.60px;top:760px;font-size:15px;color:#1b1b1b;transform:scaleX(0.7725);">SSL</div>
<div class="a" style="left:1147.00px;top:760px;font-size:15px;color:#1a5fd8;transform:scaleX(0.9581);">1</div>
<svg style="left:1523.5px;top:760.5px" width="16" height="10" viewBox="0 0 16 10">
<path d="M0.3 4.5 C3 1 5.5 0 8 0 C10.5 0 13 1 15.7 4.5 C13 8 10.5 9 8 9 C5.5 9 3 8 0.3 4.5 Z" fill="#0b7bc1"/>
<circle cx="8" cy="4.5" r="2.9" fill="none" stroke="#cfe4f2" stroke-width="1"/>
</svg>
<div class="a" style="left:1542.30px;top:760px;font-size:15px;color:#1a5fd8;transform:scaleX(0.9646);">View Resolution</div>
<svg style="left:389.8px;top:804.8px" width="16" height="15" viewBox="0 0 16 15">
<rect x="0.2" y="0" width="15" height="14.1" rx="1" fill="#e1001a"/>
<path d="M5.9 3.2 A1.8 1.8 0 0 1 9.5 3.2 L8.4 8.8 H7 Z" fill="#fff"/><circle cx="7.7" cy="11.3" r="1.35" fill="#fff"/>
</svg>
<div class="a" style="left:408.30px;top:807px;font-size:15px;color:#1a5fd8;transform:scaleX(0.9513);">There are no intermediate certificates installed due ...</div>
<div class="a" style="left:768.60px;top:807px;font-size:15px;color:#1b1b1b;transform:scaleX(0.7725);">SSL</div>
<div class="a" style="left:1147.00px;top:807px;font-size:15px;color:#1a5fd8;transform:scaleX(0.9581);">7</div>
<svg style="left:1523.5px;top:807.5px" width="16" height="10" viewBox="0 0 16 10">
<path d="M0.3 4.5 C3 1 5.5 0 8 0 C10.5 0 13 1 15.7 4.5 C13 8 10.5 9 8 9 C5.5 9 3 8 0.3 4.5 Z" fill="#0b7bc1"/>
<circle cx="8" cy="4.5" r="2.9" fill="none" stroke="#cfe4f2" stroke-width="1"/>
</svg>
<div class="a" style="left:1542.30px;top:807px;font-size:15px;color:#1a5fd8;transform:scaleX(0.9646);">View Resolution</div>
<svg style="left:389.8px;top:851.8px" width="16" height="15" viewBox="0 0 16 15">
<rect x="0.2" y="0" width="15" height="14.1" rx="1" fill="#e1001a"/>
<path d="M5.9 3.2 A1.8 1.8 0 0 1 9.5 3.2 L8.4 8.8 H7 Z" fill="#fff"/><circle cx="7.7" cy="11.3" r="1.35" fill="#fff"/>
</svg>
<div class="a" style="left:408.30px;top:854px;font-size:15px;color:#1a5fd8;transform:scaleX(0.9548);">Restrict Write Access on NGINX Directories and Fil...</div>
<div class="a" style="left:768.60px;top:854px;font-size:15px;color:#1b1b1b;transform:scaleX(0.9500);">Permission Management</div>
<div class="a" style="left:1147.00px;top:854px;font-size:15px;color:#1a5fd8;transform:scaleX(0.9581);">5</div>
<svg style="left:1523.5px;top:854.5px" width="16" height="10" viewBox="0 0 16 10">
<path d="M0.3 4.5 C3 1 5.5 0 8 0 C10.5 0 13 1 15.7 4.5 C13 8 10.5 9 8 9 C5.5 9 3 8 0.3 4.5 Z" fill="#0b7bc1"/>
<circle cx="8" cy="4.5" r="2.9" fill="none" stroke="#cfe4f2" stroke-width="1"/>
</svg>
<div class="a" style="left:1542.30px;top:854px;font-size:15px;color:#1a5fd8;transform:scaleX(0.9646);">View Resolution</div>
<svg style="left:389.8px;top:898.8px" width="16" height="15" viewBox="0 0 16 15">
<rect x="0.2" y="0" width="15" height="14.1" rx="1" fill="#e1001a"/>
<path d="M5.9 3.2 A1.8 1.8 0 0 1 9.5 3.2 L8.4 8.8 H7 Z" fill="#fff"/><circle cx="7.7" cy="11.3" r="1.35" fill="#fff"/>
</svg>
<div class="a" style="left:408.30px;top:901px;font-size:15px;color:#1a5fd8;transform:scaleX(0.9060);">Disable SSL all versions and TLS 1.0</div>
<div class="a" style="left:768.60px;top:901px;font-size:15px;color:#1b1b1b;transform:scaleX(0.9421);">Dangerous methods enabled</div>
<div class="a" style="left:1147.00px;top:901px;font-size:15px;color:#1a5fd8;transform:scaleX(0.9581);">2</div>
<svg style="left:1523.5px;top:901.5px" width="16" height="10" viewBox="0 0 16 10">
<path d="M0.3 4.5 C3 1 5.5 0 8 0 C10.5 0 13 1 15.7 4.5 C13 8 10.5 9 8 9 C5.5 9 3 8 0.3 4.5 Z" fill="#0b7bc1"/>
<circle cx="8" cy="4.5" r="2.9" fill="none" stroke="#cfe4f2" stroke-width="1"/>
</svg>
<div class="a" style="left:1542.30px;top:901px;font-size:15px;color:#1a5fd8;transform:scaleX(0.9646);">View Resolution</div>
<div class="b" style="left:1512px;top:222px;width:164px;height:38px;border:5px solid #ec1c24"></div>
<div class="a" style="left:390.20px;top:194px;font-size:16px;color:#4d4d4d;font-weight:bold;transform:scaleX(0.8467);">Web Server Misconfiguration</div>
<div class="a" style="left:768.10px;top:194px;font-size:16px;color:#4d4d4d;font-weight:bold;transform:scaleX(0.8609);">Category</div>
<div class="a" style="left:1146.40px;top:194px;font-size:16px;color:#4d4d4d;font-weight:bold;transform:scaleX(0.8283);">Affected Systems</div>
<div class="a" style="left:1524.70px;top:194px;font-size:16px;color:#4d4d4d;font-weight:bold;transform:scaleX(0.8300);">Resolution</div>
<div class="b" style="left:1899px;top:45px;width:19px;height:901px;background:#f1f1f1"></div>
<div class="b" style="left:1901px;top:66px;width:17px;height:880px;background:#c1c1c1"></div>
<svg style="left:1904px;top:53px" width="10" height="7" viewBox="0 0 10 7"><path d="M0.5 6 L5 0.8 L9.5 6 Z" fill="#a3a3a3"/></svg>
</body></html>
